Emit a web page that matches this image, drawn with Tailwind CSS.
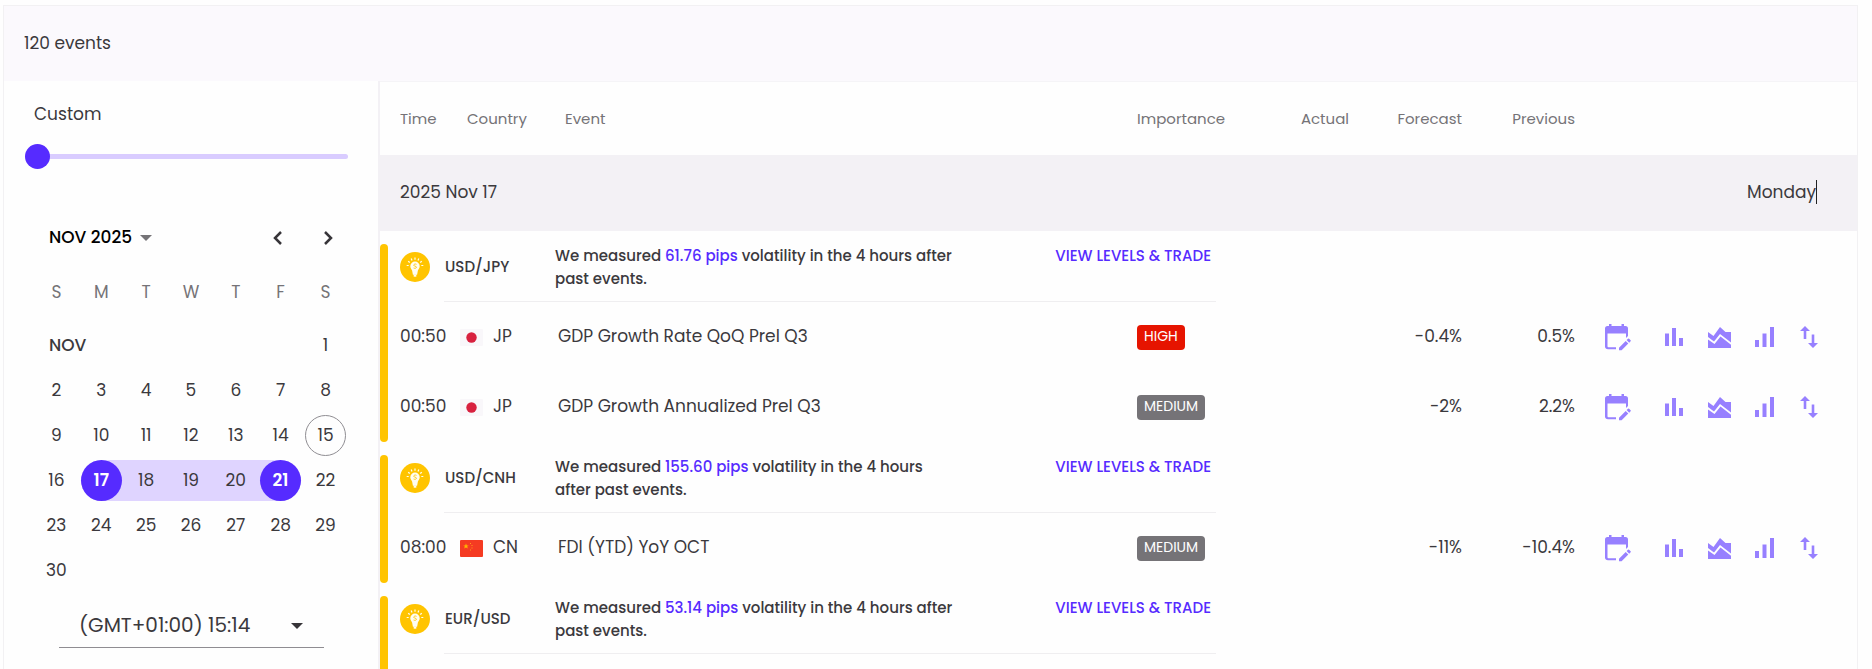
<!DOCTYPE html>
<html lang="en">
<head>
    <meta charset="UTF-8">
    <meta name="viewport" content="width=device-width, initial-scale=1.0">
    <title>Economic Calendar</title>
    <script src="https://cdn.jsdelivr.net/npm/@tailwindcss/browser@4"></script>
</head>
<body class="h-screen overflow-hidden bg-[#fefefe] font-['Poppins','Inter',sans-serif] text-[17px] text-[#3b393d]">

<!-- Shared icons -->
<svg class="hidden" xmlns="http://www.w3.org/2000/svg">
    <symbol id="icon-bulb" viewBox="0 0 30 30">
        <circle cx="15" cy="15" r="15" fill="#ffc400"/>
        <path d="M15 9.500a4.700 4.700 0 0 0-4.700 4.700c0 2 1.200 2.800 1.800 4.300l.8 4.200h4.200l.8-4.200c.6-1.500 1.800-2.300 1.800-4.300A4.700 4.700 0 0 0 15 9.500z" fill="#fffdf3"/>
        <path d="M13.700 22.500h2.600v2.200h-2.600z" fill="#fffdf3"/>
        <path d="M16.500 12.300c-1.300-.7-3 0-2.700 1.100.3 1 2.500.6 2.700 1.700.1 1-1.500 1.600-2.900.9" fill="none" stroke="#ffc400" stroke-width=".9"/>
        <path d="M15 5.500v2.200M11.200 6.500l.8 1.900M18.800 6.500l-.8 1.900M8.200 9.200l1.600 1.300M21.800 9.200l-1.600 1.300M6.700 13.500h2M23.300 13.500h-2" stroke="#fffdf3" stroke-width="1.200"/>
    </symbol>
    <symbol id="icon-calendar" viewBox="0 0 26 27">
        <path d="M4 0h2.500v2h10V0H19v2h1.500A2.500 2.500 0 0 1 23 4.500V12l-2 2V9.500H2.500v12.700a1 1 0 0 0 1 1H11v2H3A3 3 0 0 1 0 22V4.500A2.500 2.500 0 0 1 2.500 2H4z"/>
        <path d="M14 23.700l6.700-6.700 2.600 2.600-6.700 6.700H14zM21.600 16.100l1.400-1.400a.8.8 0 0 1 1.100 0l1.500 1.500a.8.8 0 0 1 0 1.100l-1.400 1.400z"/>
    </symbol>
    <symbol id="icon-bars" viewBox="0 0 18 18">
        <path d="M0 5.500h4V18H0zM7 0h4v18H7zM14 10h4v8h-4z"/>
    </symbol>
    <symbol id="icon-area" viewBox="0 0 23 21">
        <path d="M0 5l5.500 4L12 0l5.500 5H23v10.500L12 7 6 14.500 0 10z"/>
        <path d="M0 12.500l6.500 4.500L12.500 9.500 23 17.700V21H0z"/>
    </symbol>
    <symbol id="icon-signal" viewBox="0 0 19 20">
        <path d="M0 13h4v7H0zM7.500 6.500h4V20h-4zM15 0h4v20h-4z"/>
    </symbol>
    <symbol id="icon-swap" viewBox="0 0 18 22">
        <path d="M5 0l5 5H6.300v8H3.700V5H0zM13 22l-5-5h3.700V8.500h2.600V17H18z"/>
    </symbol>
    <symbol id="flag-jp" viewBox="0 0 23 17">
        <rect width="23" height="17" rx="1" fill="#f9f7fa"/>
        <circle cx="11.500" cy="8.500" r="5.200" fill="#d8213f"/>
    </symbol>
    <symbol id="flag-cn" viewBox="0 0 23 17">
        <rect width="23" height="17" rx="1" fill="#f53b22"/>
        <path d="M6 3.500l.8 1.900h2L7.200 6.600l.6 2L6 7.400 4.200 8.600l.6-2L3.200 5.400h2z" fill="#ffb400"/>
        <path d="M10 3h1v1h-1zM11.500 5h1v1h-1zM11.500 7.500h1v1h-1zM10 9.500h1v1h-1z" fill="#ff9a1a"/>
    </symbol>
</svg>

<div class="mt-[5px] ml-[3px] mr-[14px] border border-[#f2f1f3]">

    <!-- Top bar -->
    <header class="h-[75px] bg-[#fbf9fd] flex items-center pl-5">
        <h1>120 events</h1>
    </header>

    <div class="flex">

        <!-- Sidebar -->
        <aside class="w-[376px] shrink-0 border-r-2 border-[#f3f1f5]">
            <div class="pt-[19px] pl-[21px] pr-[30px]">
                <label for="range" class="block pl-[9px] leading-7">Custom</label>
                <input id="range" type="range" min="0" max="100" value="0" class="block w-full mt-4 h-[25px] appearance-none bg-transparent [&::-webkit-slider-runnable-track]:h-[5px] [&::-webkit-slider-runnable-track]:rounded-full [&::-webkit-slider-runnable-track]:bg-[#d9ccff] [&::-webkit-slider-thumb]:appearance-none [&::-webkit-slider-thumb]:size-[25px] [&::-webkit-slider-thumb]:-mt-[10px] [&::-webkit-slider-thumb]:rounded-full [&::-webkit-slider-thumb]:bg-[#562bff]">
            </div>

            <div class="px-[30px] mt-[49px]">
                <div class="flex items-center h-10">
                    <button type="button" class="flex items-center gap-2 pl-[15px] font-medium text-black">
                        NOV 2025
                        <svg class="w-3 h-[6px]" viewBox="0 0 12 6" fill="#757377"><path d="M0 0h12L6 6z"/></svg>
                    </button>
                    <button type="button" aria-label="Previous month" class="ml-auto w-[51px] h-10 flex items-center justify-center">
                        <svg class="w-[9px] h-[14px]" viewBox="0 0 9 14" fill="none" stroke="#373539" stroke-width="2.500"><path d="M8 1L2 7l6 6"/></svg>
                    </button>
                    <button type="button" aria-label="Next month" class="w-[51px] -mr-[6px] h-10 flex items-center justify-center">
                        <svg class="w-[9px] h-[14px]" viewBox="0 0 9 14" fill="none" stroke="#373539" stroke-width="2.500"><path d="M1 1l6 6-6 6"/></svg>
                    </button>
                </div>

                <table class="w-full table-fixed mt-3 text-center">
                    <thead>
                        <tr class="h-[45px] text-[#757377]">
                            <th class="font-normal">S</th><th class="font-normal">M</th><th class="font-normal">T</th><th class="font-normal">W</th><th class="font-normal">T</th><th class="font-normal">F</th><th class="font-normal">S</th>
                        </tr>
                    </thead>
                    <tbody>
                        <tr><td colspan="7" class="h-2"></td></tr>
                        <tr class="h-[45px]">
                            <th colspan="6" class="text-left pl-[15px] font-medium">NOV</th>
                            <td><button type="button">1</button></td>
                        </tr>
                        <tr class="h-[45px]">
                            <td><button type="button">2</button></td><td><button type="button">3</button></td><td><button type="button">4</button></td><td><button type="button">5</button></td><td><button type="button">6</button></td><td><button type="button">7</button></td><td><button type="button">8</button></td>
                        </tr>
                        <tr class="h-[45px]">
                            <td><button type="button">9</button></td><td><button type="button">10</button></td><td><button type="button">11</button></td><td><button type="button">12</button></td><td><button type="button">13</button></td><td><button type="button">14</button></td>
                            <td class="p-0"><button type="button" class="size-[41px] rounded-full border border-[#8f8d92] align-middle">15</button></td>
                        </tr>
                        <tr class="h-[45px]">
                            <td><button type="button">16</button></td>
                            <td class="p-0"><div class="ml-[2px] flex rounded-l-full bg-[#dfd4ff]"><button type="button" class="size-[41px] rounded-full bg-[#562bff] text-white font-semibold">17</button></div></td>
                            <td class="p-0"><div class="bg-[#dfd4ff]"><button type="button" class="h-[41px] align-middle">18</button></div></td>
                            <td class="p-0"><div class="bg-[#dfd4ff]"><button type="button" class="h-[41px] align-middle">19</button></div></td>
                            <td class="p-0"><div class="bg-[#dfd4ff]"><button type="button" class="h-[41px] align-middle">20</button></div></td>
                            <td class="p-0"><div class="mr-[2px] flex justify-end rounded-r-full bg-[#dfd4ff]"><button type="button" class="size-[41px] rounded-full bg-[#562bff] text-white font-semibold">21</button></div></td>
                            <td><button type="button">22</button></td>
                        </tr>
                        <tr class="h-[45px]">
                            <td><button type="button">23</button></td><td><button type="button">24</button></td><td><button type="button">25</button></td><td><button type="button">26</button></td><td><button type="button">27</button></td><td><button type="button">28</button></td><td><button type="button">29</button></td>
                        </tr>
                        <tr class="h-[45px]">
                            <td><button type="button">30</button></td><td colspan="6"></td>
                        </tr>
                    </tbody>
                </table>
            </div>

            <div class="relative ml-[55px] mr-[54px] mt-[10px]">
                <select aria-label="Time zone" class="w-full h-[45px] pl-5 appearance-none bg-transparent border-b border-[#8f8d92] text-[20px]">
                    <option>(GMT+01:00) 15:14</option>
                </select>
                <svg class="absolute right-[21px] top-5 w-3 h-[6px] pointer-events-none" viewBox="0 0 12 6" fill="#373539"><path d="M0 0h12L6 6z"/></svg>
            </div>
        </aside>

        <!-- Events -->
        <main class="flex-1 min-w-0 border-t border-[#f5f4f7]">
            <table class="w-full table-fixed border-separate border-spacing-0 text-left">
                <colgroup>
                    <col class="w-2">
                    <col class="w-[60px]">
                    <col class="w-[100px]">
                    <col>
                    <col class="w-[112px]">
                    <col class="w-[100px]">
                    <col class="w-[113px]">
                    <col class="w-[113px]">
                    <col class="w-[282px]">
                </colgroup>
                <thead>
                    <tr class="h-[73px] text-[15px] text-[#757377]">
                        <th></th>
                        <th class="pt-[2px] pl-3 font-normal">Time</th>
                        <th class="pt-[2px] pl-[19px] font-normal">Country</th>
                        <th class="pt-[2px] pl-[17px] font-normal">Event</th>
                        <th class="pt-[2px] font-normal">Importance</th>
                        <th class="pt-[2px] font-normal text-right">Actual</th>
                        <th class="pt-[2px] font-normal text-right">Forecast</th>
                        <th class="pt-[2px] font-normal text-right">Previous</th>
                        <th></th>
                    </tr>
                </thead>

                <tbody>
                    <tr class="h-[76px] bg-[#f3f1f5]">
                        <th colspan="4" class="pl-5 font-normal">2025 Nov 17</th>
                        <td colspan="5" class="pr-10 text-right"><span class="border-r border-[#222]">Monday</span></td>
                    </tr>
                    <tr><td colspan="9" class="h-[13px]"></td></tr>
                </tbody>

                <!-- USD/JPY -->
                <tbody>
                    <tr>
                        <td rowspan="3" class="bg-[#ffc400] rounded-full"></td>
                        <td colspan="8" class="h-[58px]">
                            <div class="flex h-[58px] pl-3">
                                <svg class="size-[30px] mt-2 mr-[14px] shrink-0"><use href="#icon-bulb"/></svg>
                                <div class="flex items-start flex-1 max-w-[772px] border-b border-[#efeef0] text-[15px] leading-[23px] font-medium">
                                    <span class="w-[111px] shrink-0 pl-px pt-[11px]">USD/JPY</span>
                                    <p class="w-[402px]">We measured <span class="text-[#562bff]">61.76 pips</span> volatility in the 4 hours after past events.</p>
                                    <a href="#" class="ml-auto pr-[5px] text-[#562bff]">VIEW LEVELS &amp; TRADE</a>
                                </div>
                            </div>
                        </td>
                    </tr>
                    <tr class="h-[70px]">
                        <td class="pl-3">00:50</td>
                        <td class="pl-3"><span class="flex items-center gap-[10px]"><svg class="w-[23px] h-[17px]"><use href="#flag-jp"/></svg>JP</span></td>
                        <td class="pl-[10px]">GDP Growth Rate QoQ Prel Q3</td>
                        <td><span class="block w-fit h-[25px] px-[7px] rounded bg-[#e61400] text-white text-[14px] leading-[23px]">HIGH</span></td>
                        <td></td>
                        <td class="text-right">-0.4%</td>
                        <td class="text-right">0.5%</td>
                        <td class="pl-[30px]">
                            <div class="flex items-center text-[#9780ff] fill-current">
                                <button type="button" aria-label="Add to calendar" class="w-[60px]"><svg class="w-[26px] h-[27px]"><use href="#icon-calendar"/></svg></button>
                                <button type="button" aria-label="Bar chart" class="w-[43px]"><svg class="size-[18px]"><use href="#icon-bars"/></svg></button>
                                <button type="button" aria-label="Area chart" class="w-[47px]"><svg class="w-[23px] h-[21px]"><use href="#icon-area"/></svg></button>
                                <button type="button" aria-label="Volatility" class="w-[45px]"><svg class="w-[19px] h-5"><use href="#icon-signal"/></svg></button>
                                <button type="button" aria-label="Compare"><svg class="w-[18px] h-[22px]"><use href="#icon-swap"/></svg></button>
                            </div>
                        </td>
                    </tr>
                    <tr class="h-[70px]">
                        <td class="pl-3">00:50</td>
                        <td class="pl-3"><span class="flex items-center gap-[10px]"><svg class="w-[23px] h-[17px]"><use href="#flag-jp"/></svg>JP</span></td>
                        <td class="pl-[10px]">GDP Growth Annualized Prel Q3</td>
                        <td><span class="block w-fit h-[25px] px-[7px] rounded bg-[#757377] text-white text-[14px] leading-[23px]">MEDIUM</span></td>
                        <td></td>
                        <td class="text-right">-2%</td>
                        <td class="text-right">2.2%</td>
                        <td class="pl-[30px]">
                            <div class="flex items-center text-[#9780ff] fill-current">
                                <button type="button" aria-label="Add to calendar" class="w-[60px]"><svg class="w-[26px] h-[27px]"><use href="#icon-calendar"/></svg></button>
                                <button type="button" aria-label="Bar chart" class="w-[43px]"><svg class="size-[18px]"><use href="#icon-bars"/></svg></button>
                                <button type="button" aria-label="Area chart" class="w-[47px]"><svg class="w-[23px] h-[21px]"><use href="#icon-area"/></svg></button>
                                <button type="button" aria-label="Volatility" class="w-[45px]"><svg class="w-[19px] h-5"><use href="#icon-signal"/></svg></button>
                                <button type="button" aria-label="Compare"><svg class="w-[18px] h-[22px]"><use href="#icon-swap"/></svg></button>
                            </div>
                        </td>
                    </tr>
                    <tr><td colspan="9" class="h-[13px]"></td></tr>
                </tbody>

                <!-- USD/CNH -->
                <tbody>
                    <tr>
                        <td rowspan="2" class="bg-[#ffc400] rounded-full"></td>
                        <td colspan="8" class="h-[58px]">
                            <div class="flex h-[58px] pl-3">
                                <svg class="size-[30px] mt-2 mr-[14px] shrink-0"><use href="#icon-bulb"/></svg>
                                <div class="flex items-start flex-1 max-w-[772px] border-b border-[#efeef0] text-[15px] leading-[23px] font-medium">
                                    <span class="w-[111px] shrink-0 pl-px pt-[11px]">USD/CNH</span>
                                    <p class="w-[402px]">We measured <span class="text-[#562bff]">155.60 pips</span> volatility in the 4 hours after past events.</p>
                                    <a href="#" class="ml-auto pr-[5px] text-[#562bff]">VIEW LEVELS &amp; TRADE</a>
                                </div>
                            </div>
                        </td>
                    </tr>
                    <tr class="h-[70px]">
                        <td class="pl-3">08:00</td>
                        <td class="pl-3"><span class="flex items-center gap-[10px]"><svg class="w-[23px] h-[17px]"><use href="#flag-cn"/></svg>CN</span></td>
                        <td class="pl-[10px]">FDI (YTD) YoY OCT</td>
                        <td><span class="block w-fit h-[25px] px-[7px] rounded bg-[#757377] text-white text-[14px] leading-[23px]">MEDIUM</span></td>
                        <td></td>
                        <td class="text-right">-11%</td>
                        <td class="text-right">-10.4%</td>
                        <td class="pl-[30px]">
                            <div class="flex items-center text-[#9780ff] fill-current">
                                <button type="button" aria-label="Add to calendar" class="w-[60px]"><svg class="w-[26px] h-[27px]"><use href="#icon-calendar"/></svg></button>
                                <button type="button" aria-label="Bar chart" class="w-[43px]"><svg class="size-[18px]"><use href="#icon-bars"/></svg></button>
                                <button type="button" aria-label="Area chart" class="w-[47px]"><svg class="w-[23px] h-[21px]"><use href="#icon-area"/></svg></button>
                                <button type="button" aria-label="Volatility" class="w-[45px]"><svg class="w-[19px] h-5"><use href="#icon-signal"/></svg></button>
                                <button type="button" aria-label="Compare"><svg class="w-[18px] h-[22px]"><use href="#icon-swap"/></svg></button>
                            </div>
                        </td>
                    </tr>
                    <tr><td colspan="9" class="h-[13px]"></td></tr>
                </tbody>

                <!-- EUR/USD -->
                <tbody>
                    <tr>
                        <td rowspan="2" class="bg-[#ffc400] rounded-t-full"></td>
                        <td colspan="8" class="h-[58px]">
                            <div class="flex h-[58px] pl-3">
                                <svg class="size-[30px] mt-2 mr-[14px] shrink-0"><use href="#icon-bulb"/></svg>
                                <div class="flex items-start flex-1 max-w-[772px] border-b border-[#efeef0] text-[15px] leading-[23px] font-medium">
                                    <span class="w-[111px] shrink-0 pl-px pt-[11px]">EUR/USD</span>
                                    <p class="w-[402px]">We measured <span class="text-[#562bff]">53.14 pips</span> volatility in the 4 hours after past events.</p>
                                    <a href="#" class="ml-auto pr-[5px] text-[#562bff]">VIEW LEVELS &amp; TRADE</a>
                                </div>
                            </div>
                        </td>
                    </tr>
                    <tr class="h-4"><td colspan="8"></td></tr>
                </tbody>
            </table>
        </main>
    </div>
</div>

</body>
</html>
